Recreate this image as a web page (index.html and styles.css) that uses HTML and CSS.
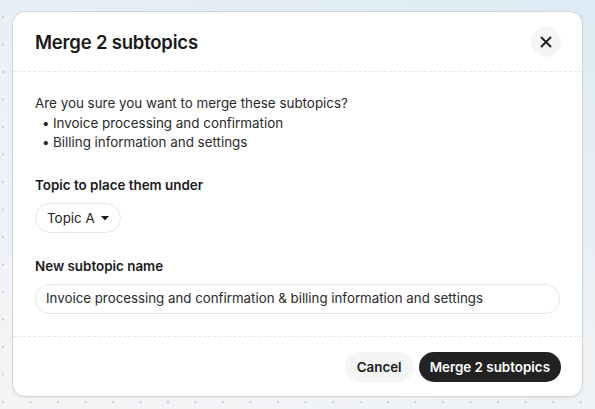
FILE: index.html
```html
<!DOCTYPE html>
<html lang="en">
<head>
<meta charset="utf-8">
<link rel="stylesheet" href="styles.css">
</head>
<body>
<div class="page">
  <div class="dialog">
    <div class="header">
      <h1 class="title">Merge 2 subtopics</h1>
      <button class="close" aria-label="Close">
        <svg width="12" height="12" viewBox="0 0 12 12"><path d="M1.5 1.5 L10.5 10.5 M10.5 1.5 L1.5 10.5" stroke="#1c1c1c" stroke-width="1.9" stroke-linecap="round"/></svg>
      </button>
    </div>
    <div class="body">
      <div class="question">
        <p class="line">Are you sure you want to merge these subtopics?</p>
        <ul class="list">
          <li>Invoice processing and confirmation</li>
          <li>Billing information and settings</li>
        </ul>
      </div>
      <div class="field">
        <div class="label">Topic to place them under</div>
        <div class="select-row">
          <button class="select">Topic A
            <svg class="caret" width="8" height="5" viewBox="0 0 8 5"><path d="M0 0 H8 L4 4.5 Z" fill="#1c1c1c"/></svg>
          </button>
        </div>
      </div>
      <div class="field">
        <div class="label">New subtopic name</div>
        <div class="input">Invoice processing and confirmation &amp; billing information and settings</div>
      </div>
    </div>
    <div class="footer">
      <button class="btn btn-cancel">Cancel</button>
      <button class="btn btn-primary">Merge 2 subtopics</button>
    </div>
  </div>
</div>
</body>
</html>
```
FILE: styles.css
```css
* { box-sizing: border-box; }
html, body { margin: 0; padding: 0; }
body {
  width: 595px;
  height: 409px;
  overflow: hidden;
  font-family: Inter, "Noto Sans", sans-serif;
  color: #1f1f1f;
  background-color: #eef2f5;
  background-image:
    radial-gradient(circle, #c9cfd5 0.9px, transparent 1.4px),
    linear-gradient(20deg, #f3f4f6 0%, #eef2f5 45%, #dcebf4 100%);
  background-size: 27.5px 27.5px, 100% 100%;
  background-position: -10.75px 3.25px, 0 0;
}
.page {
  padding: 11px 12px 0 12px;
}
.dialog {
  width: 571px;
  height: 386px;
  background: #fff;
  border: 1px solid #d3d6d9;
  border-radius: 13px;
  box-shadow: 0 1px 2px rgba(0,0,0,0.06);
  display: flex;
  flex-direction: column;
}
.header {
  height: 60px;
  flex: none;
  display: flex;
  align-items: center;
  justify-content: space-between;
  padding: 0 21px 0 22px;
  border-bottom: 1px dashed #e6e6e6;
}
.title {
  margin: 0;
  font-size: 18.5px;
  font-weight: 600;
  letter-spacing: -0.2px;
  color: #1a1a1a;
}
.close {
  width: 30px;
  height: 30px;
  border-radius: 50%;
  border: none;
  background: #f5f5f5;
  display: flex;
  align-items: center;
  justify-content: center;
  padding: 0;
}
.body {
  flex: 1;
  padding: 22px 22px 0 22px;
  font-size: 13.4px;
  line-height: 19.5px;
  color: #2a2a2a;
}
.line { margin: 0; }
.list {
  margin: 0;
  padding: 0 0 0 18px;
  list-style: none;
}
.list li::before {
  content: "•";
  display: inline-block;
  width: 11px;
  margin-left: -11px;
}
.field { margin-top: 22px; }
.field + .field { margin-top: 23px; }
.label {
  font-weight: 600;
  color: #1c1c1c;
  line-height: 20px;
  margin-bottom: 8px;
}
.select-row { display: flex; }
.select {
  height: 30px;
  padding: 0 11px 0 11px;
  border: 1px solid #e6e6e6;
  border-radius: 15px;
  background: #fff;
  font-family: inherit;
  font-size: 13.4px;
  color: #222;
  display: flex;
  align-items: center;
  gap: 6px;
}
.caret { margin-top: 1px; }
.input {
  height: 30px;
  border: 1px solid #e6e6e6;
  border-radius: 15px;
  padding: 0 10px;
  display: flex;
  align-items: center;
  font-size: 13.3px;
  color: #2a2a2a;
}
.footer {
  height: 60px;
  flex: none;
  display: flex;
  align-items: center;
  justify-content: flex-end;
  gap: 5px;
  padding: 0 21px;
  border-top: 1px dashed #e6e6e6;
}
.btn {
  height: 30px;
  border-radius: 15px;
  border: none;
  font-family: inherit;
  font-size: 13.4px;
  font-weight: 600;
  padding: 0 11px;
}
.btn-cancel { background: #f5f5f5; color: #1c1c1c; padding: 0 12px; }
.btn-primary { background: #222222; color: #fff; }
```
